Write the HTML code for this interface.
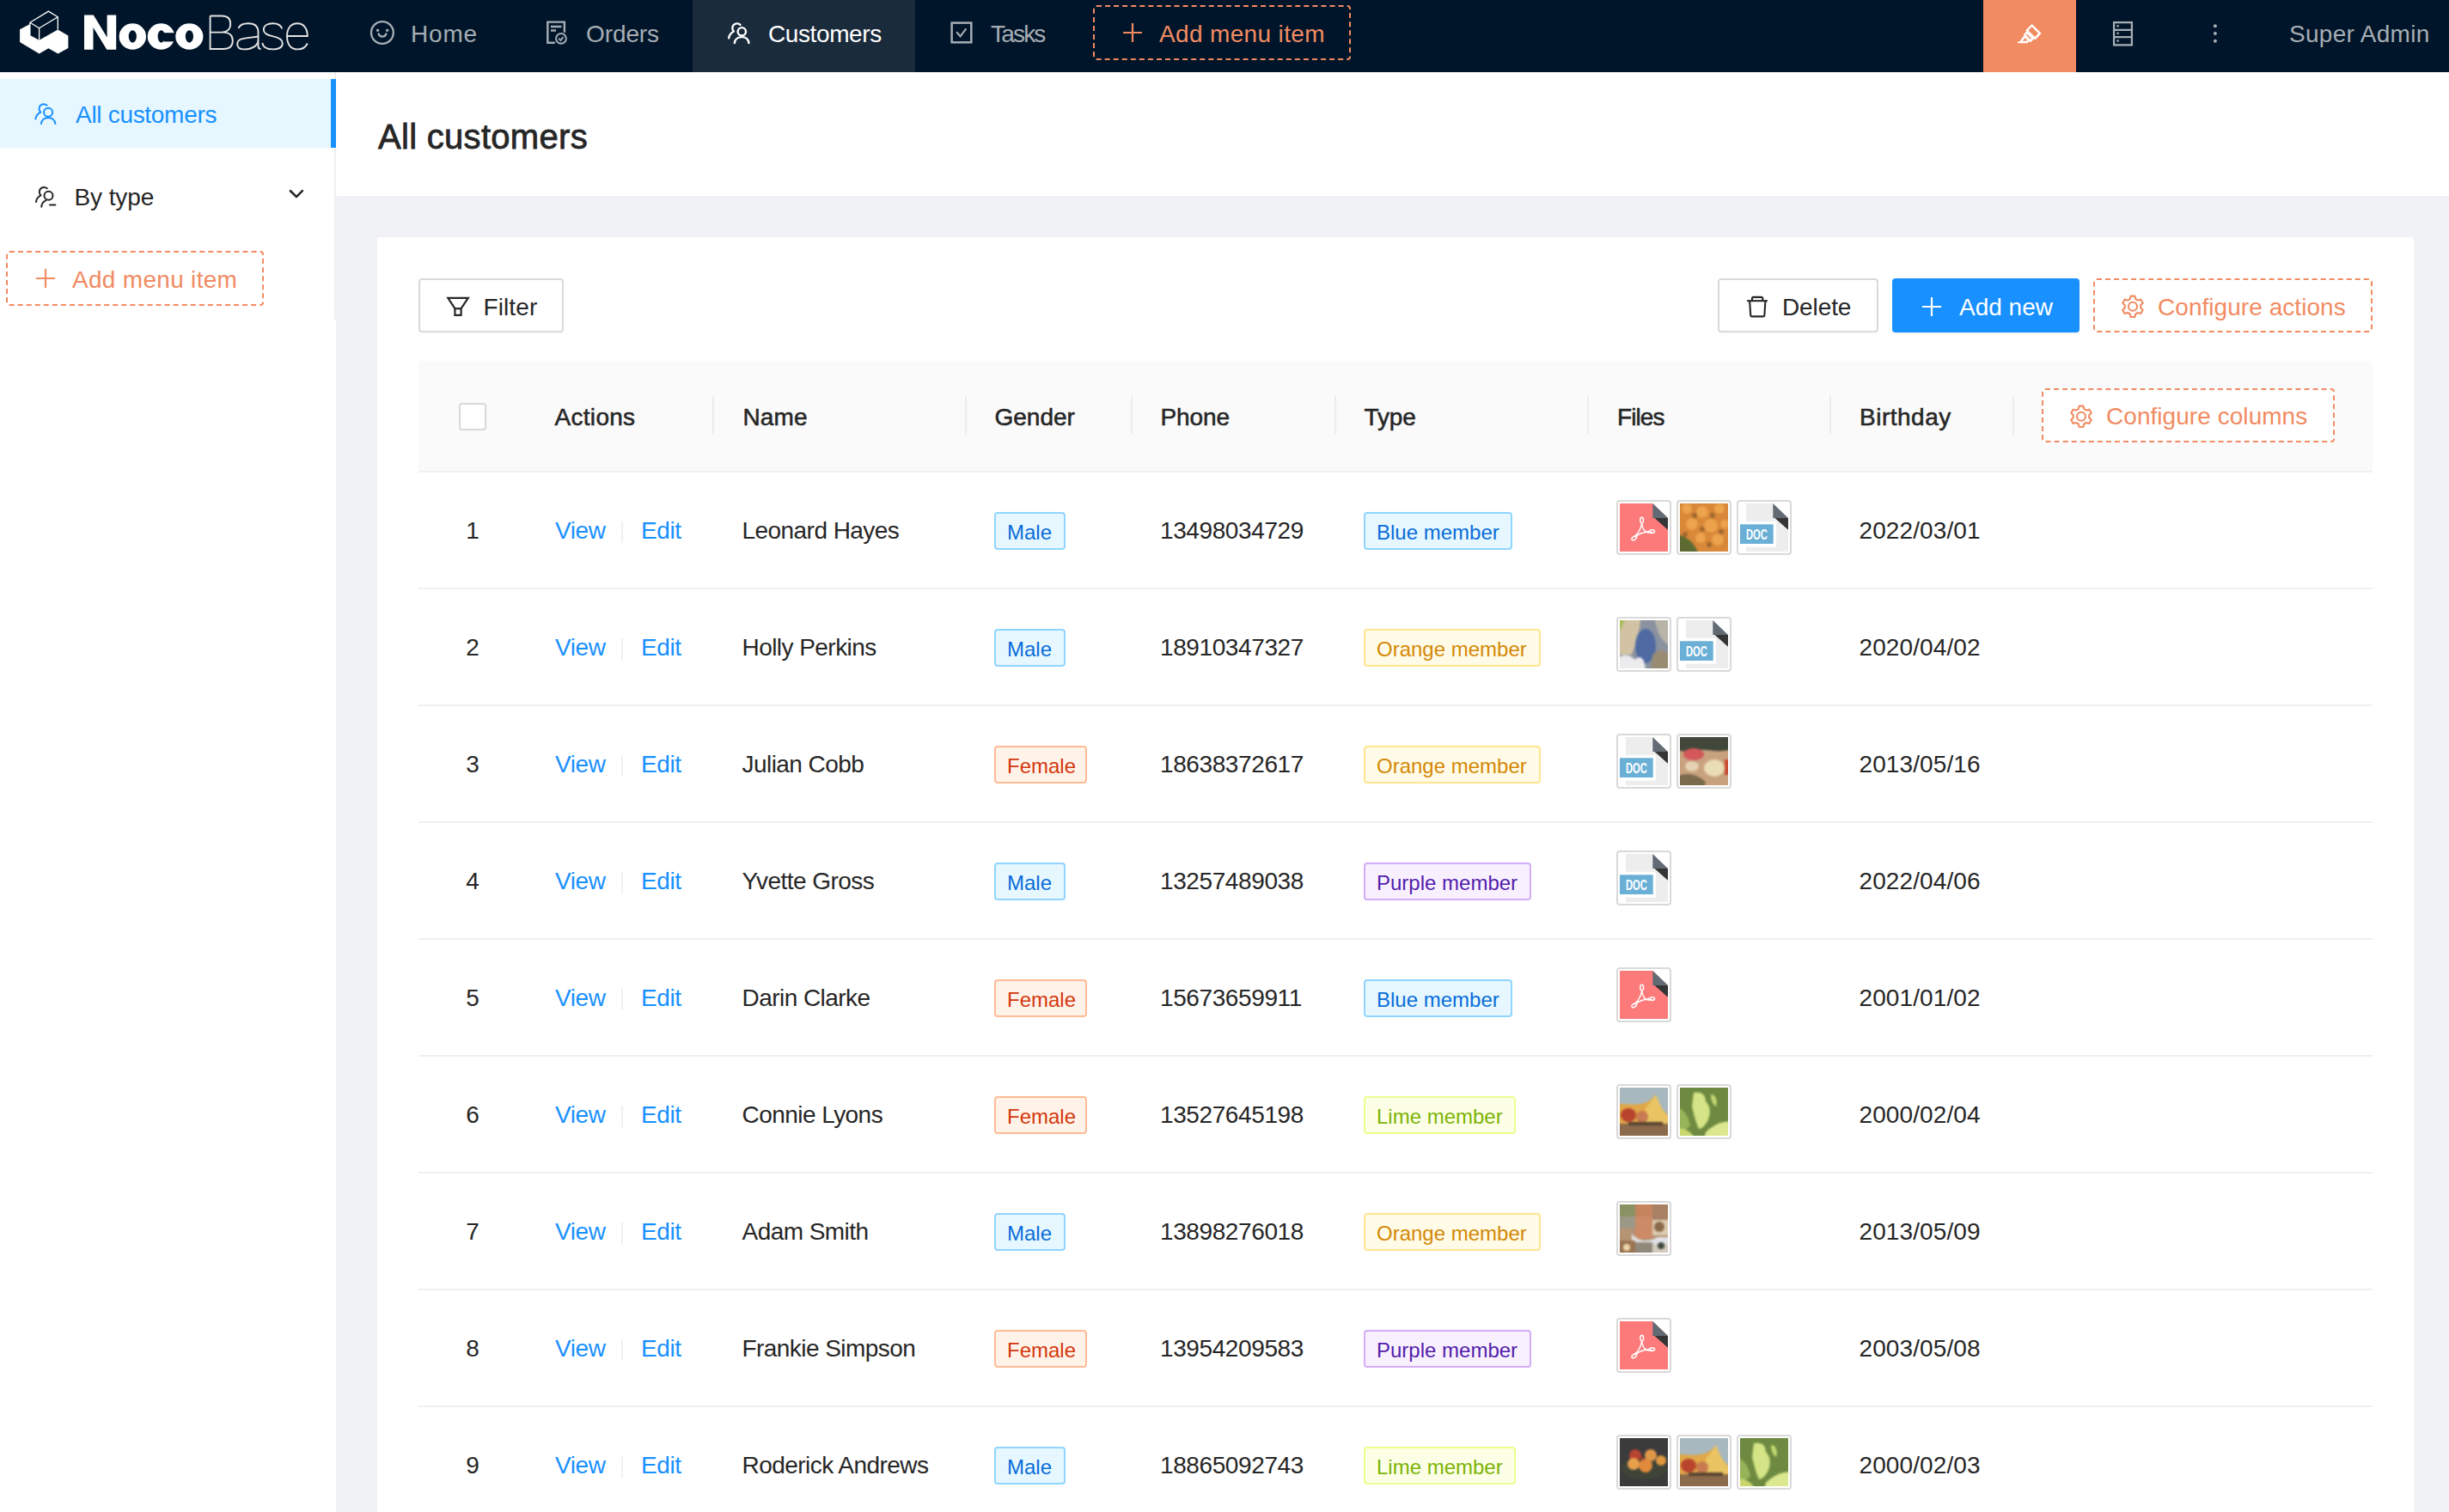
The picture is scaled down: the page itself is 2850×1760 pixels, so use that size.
<!DOCTYPE html>
<html><head><meta charset="utf-8"><style>
html,body{margin:0;padding:0;width:2850px;height:1760px;overflow:hidden;font-family:"Liberation Sans", sans-serif}
body{position:relative}
.t{position:absolute;white-space:nowrap;font-family:"Liberation Sans", sans-serif}
.tag{position:absolute;box-sizing:border-box;height:44px;border:2px solid;border-radius:4px;font-size:24px;line-height:44px;padding-left:13px;white-space:nowrap;font-family:"Liberation Sans", sans-serif}
.thumb{position:absolute;box-sizing:border-box;width:64px;height:64px;border:2px solid #d9d9d9;border-radius:4px;padding:2px;background:#fff}
.ti{position:relative;width:56px;height:56px;overflow:hidden}
</style></head><body>
<div style="position:absolute;left:0px;top:0px;width:2850px;height:1760px;background:#f0f2f5"></div><div style="position:absolute;left:0px;top:0px;width:2850px;height:84px;background:#001529"></div><div style="position:absolute;left:806px;top:0px;width:259px;height:84px;background:#1a2b3c"></div><div style="position:absolute;left:2308px;top:0px;width:108px;height:84px;background:#f18b62"></div><svg style="position:absolute;left:0px;top:0px;" width="380" height="84" viewBox="0 0 380 84">
<path fill="#fff" d="M23.1,34.2 L34.9,28.1 L34.9,41.1 L45.6,46.7 L67.3,34.6 L79.4,41.6 L79.4,55.9 L67.5,62.6 L56.4,56.2 L45.6,62.4 L23.1,49 Z"/>
<g fill="none" stroke="#fff" stroke-width="1.3" stroke-linejoin="round">
<path d="M56.4,13.1 L67.3,19.8 L45.6,32.8 L34.9,26.3 Z"/>
<path d="M34.9,26.3 V41.1 M45.6,32.8 V46.7 M67.3,19.8 V34.6"/>
</g>
<path fill="#fff" d="M98,17.6 H108.8 L124.6,43.5 V17.6 H135.2 V57.8 H124.3 L108.5,32 V57.8 H98 Z"/>
<path fill="#fff" fill-rule="evenodd" d="M138.6,42.55 A15.7,15.25 0 1,0 170,42.55 A15.7,15.25 0 1,0 138.6,42.55 Z M149.7,42.45 A4.6,7.2 0 1,0 158.9,42.45 A4.6,7.2 0 1,0 149.7,42.45 Z"/>
<path fill="#fff" fill-rule="evenodd" d="M171.7,42.55 A15.75,15.25 0 1,0 203.2,42.55 A15.75,15.25 0 1,0 171.7,42.55 Z M183.6,42.45 A4.1,7.2 0 1,0 191.8,42.45 A4.1,7.2 0 1,0 183.6,42.45 Z"/>
<rect x="190.5" y="38.2" width="14" height="10.2" fill="#001529"/>
<path fill="#fff" fill-rule="evenodd" d="M204.3,42.55 A16,15.25 0 1,0 236.4,42.55 A16,15.25 0 1,0 204.3,42.55 Z M215.8,42.45 A4.6,7.2 0 1,0 225,42.45 A4.6,7.2 0 1,0 215.8,42.45 Z"/>
<g fill="none" stroke="#e4e4e4" stroke-width="1.9">
<path d="M244.6,18.5 V57 H260 C267.5,57 270.8,53 270.8,47.3 C270.8,41.5 267,37.6 259.5,37.6 H244.6 M244.6,18.5 H258 C265,18.5 268.2,22 268.2,27.8 C268.2,33.5 264.5,37.6 258,37.6"/>
<path d="M277.5,33 C279,28.5 283,27.2 289,27.2 C296.5,27.2 300.5,30.5 300.5,37.5 V53.5 C300.5,56 301.5,57 303.5,57 M300.5,42.5 C292,43.8 285,44.2 280.5,45.6 C277.5,46.6 276.2,49 276.2,51.5 C276.2,55.3 279.5,57.4 284.5,57.4 C292.5,57.4 300.5,53.5 300.5,46.5"/>
<path d="M328.3,33.5 C327,29.3 323,27.2 317.5,27.2 C311,27.2 306.8,30 306.8,34.5 C306.8,39 310.5,40.8 317,42.1 C324,43.5 328.8,45.5 328.8,50.3 C328.8,54.8 324.5,57.4 317.5,57.4 C310.5,57.4 306.2,54.8 305.2,50"/>
<path d="M334,42 H357.8 C357.8,32.5 353,27.2 346,27.2 C338.5,27.2 334,33 334,42.3 C334,51.5 338.5,57.4 346.2,57.4 C352,57.4 355.8,55 357.8,50.5"/>
</g>
</svg><svg style="position:absolute;left:420px;top:14px;" width="60" height="50" viewBox="0 0 60 50"><g fill="none" stroke="#a6adb4" stroke-width="2.3"><circle cx="24.9" cy="24" r="12.9"/><path d="M20.6,25.4 C21.8,29.6 28.2,29.6 29.4,25.4" stroke-linecap="round"/></g><g fill="#a6adb4"><rect x="18" y="19.9" width="3.2" height="2.8"/><rect x="29" y="19.9" width="3.2" height="2.8"/></g></svg><div class="t" style="left:478px;top:26.20px;font-size:28px;line-height:28px;color:#a6adb4;font-weight:normal;letter-spacing:0.8px;">Home</div><svg style="position:absolute;left:625px;top:14px;" width="50" height="50" viewBox="0 0 50 50"><g fill="none" stroke="#a6adb4" stroke-width="2.4"><path d="M20.8,35.7 H12.3 V11.6 H31.9 V23.7"/><path d="M16,17 H28.4 M16,21.5 H22"/></g><g fill="none" stroke="#a6adb4" stroke-width="2"><circle cx="27.95" cy="30.9" r="5.9"/><path d="M25.1,30.8 L27.5,33.1 L30.4,29.1"/></g></svg><div class="t" style="left:682px;top:26.20px;font-size:28px;line-height:28px;color:#a6adb4;font-weight:normal;letter-spacing:-0.1px;">Orders</div><svg style="position:absolute;left:835px;top:14px;" width="50" height="50" viewBox="0 0 50 50"><g fill="none" stroke="#fff" stroke-width="2.4" stroke-linecap="round" stroke-linejoin="round"><path d="M26.5,14.9 A5.2,5.2 0 1,0 18.9,22.5 C15.5,24.3 13.6,27 13.2,30.4"/><circle cx="28.3" cy="22.8" r="4.7"/><path d="M19.8,36.1 C20.3,31.8 23.8,29.1 28.3,29.1 C32.8,29.1 36,31.8 36.4,36.1"/></g></svg><div class="t" style="left:894px;top:26.20px;font-size:28px;line-height:28px;color:#fff;font-weight:normal;letter-spacing:-0.4px;">Customers</div><svg style="position:absolute;left:1095px;top:14px;" width="50" height="50" viewBox="0 0 50 50"><g fill="none" stroke="#a6adb4" stroke-width="2.5"><rect x="12.6" y="12.6" width="22.7" height="22.7"/></g><path d="M18.2,23.3 L22.5,28.3 L29.4,19.4" fill="none" stroke="#a6adb4" stroke-width="2.1"/></svg><div class="t" style="left:1153px;top:26.20px;font-size:28px;line-height:28px;color:#a6adb4;font-weight:normal;letter-spacing:-1.8px;">Tasks</div><div style="position:absolute;left:1272px;top:6px;width:300px;height:64px;border:2px dashed #f18b62;border-radius:4px;box-sizing:border-box"></div><svg style="position:absolute;left:1300px;top:20px;" width="40" height="40" viewBox="0 0 40 40"><path d="M18,7 V29 M7,18 H29" stroke="#f18b62" stroke-width="2.2"/></svg><div class="t" style="left:1349px;top:26.20px;font-size:28px;line-height:28px;color:#f18b62;font-weight:normal;letter-spacing:0.35px;">Add menu item</div><svg style="position:absolute;left:2332px;top:14px;" width="60" height="50" viewBox="0 0 60 50"><g fill="#fff" fill-rule="evenodd"><path d="M32.6,14.1 L43.7,24.8 L36.4,32.4 L25.1,21.5 Z M32.4,17.1 L40.1,24.8 L36.1,28.9 L28.4,21.5 Z"/><path d="M26.3,22.4 L35.2,31.2 L30.9,35.4 L22.6,26.8 Z M26.8,25.6 L31.8,30.5 L30.8,31.7 L25.8,26.7 Z"/><path d="M23.2,27.5 L29.5,34 L27.6,36.3 L16.2,36.3 L16.2,34.3 L18.5,34.3 Z M24.6,30.3 L27.2,32.8 L26.4,33.8 L21.6,33.8 Z"/></g></svg><svg style="position:absolute;left:2440px;top:14px;" width="160" height="50" viewBox="0 0 160 50"><g fill="none" stroke="#a6adb4" stroke-width="2.3"><rect x="20.1" y="12.1" width="20.8" height="26.3"/><path d="M20.1,20.9 H40.9 M20.1,29.1 H40.9"/></g><g fill="#a6adb4"><circle cx="24.7" cy="16.3" r="1.3"/><circle cx="24.7" cy="24.8" r="1.3"/><circle cx="24.7" cy="33.6" r="1.3"/><circle cx="137.9" cy="16.2" r="2"/><circle cx="137.9" cy="25" r="2"/><circle cx="137.9" cy="33.7" r="2"/></g></svg><div class="t" style="left:2664px;top:26.20px;font-size:28px;line-height:28px;color:#a6adb4;font-weight:normal;letter-spacing:0.3px;">Super Admin</div><div style="position:absolute;left:0px;top:84px;width:391px;height:1676px;background:#fff"></div><div style="position:absolute;left:389px;top:84px;width:2px;height:288px;background:#f0f0f0"></div><div style="position:absolute;left:0px;top:92px;width:385px;height:80px;background:#e6f7ff"></div><div style="position:absolute;left:385px;top:92px;width:6px;height:80px;background:#1890ff"></div><svg style="position:absolute;left:30px;top:108px;" width="50" height="50" viewBox="0 0 50 50"><g fill="none" stroke="#1890ff" stroke-width="2" stroke-linecap="round" stroke-linejoin="round"><path d="M24.5,14.5 A5.3,5.3 0 1,0 17.3,22.6 C14,24.2 11.8,27 11.4,30.4"/><circle cx="26.1" cy="22.8" r="5.05"/><path d="M17.9,36 C18.5,31.5 22,28.9 26.1,28.9 C30.2,28.9 33.8,31.5 34.4,36"/></g></svg><div class="t" style="left:88px;top:119.50px;font-size:28px;line-height:28px;color:#1890ff;font-weight:normal;letter-spacing:-0.3px;">All customers</div><svg style="position:absolute;left:30px;top:205px;" width="50" height="50" viewBox="0 0 50 50"><g fill="none" stroke="#262626" stroke-width="2" stroke-linecap="round" stroke-linejoin="round"><path d="M24.8,14.3 A5.3,5.3 0 1,0 17.6,22.4 C14.4,24 12.3,27 11.9,30.1"/><circle cx="26.5" cy="22.8" r="5"/><path d="M18.2,35.7 C18.6,32 20.5,29.5 23.4,28.3"/><path d="M28,33.4 H34.4"/></g></svg><div class="t" style="left:86.5px;top:215.70px;font-size:28px;line-height:28px;color:#262626;font-weight:normal;letter-spacing:-0.1px;">By type</div><svg style="position:absolute;left:320px;top:205px;" width="50" height="50" viewBox="0 0 50 50"><path d="M18,17.2 L25,24.1 L31.9,17.2" fill="none" stroke="#262626" stroke-width="2.6" stroke-linecap="round" stroke-linejoin="round"/></svg><div style="position:absolute;left:7px;top:292px;width:300px;height:64px;border:2px dashed #f18b62;border-radius:4px;box-sizing:border-box"></div><svg style="position:absolute;left:30px;top:305px;" width="50" height="50" viewBox="0 0 50 50"><path d="M23,8 V30 M12,19 H34" stroke="#f18b62" stroke-width="2.2"/></svg><div class="t" style="left:84px;top:311.70px;font-size:28px;line-height:28px;color:#f18b62;font-weight:normal;letter-spacing:0.3px;">Add menu item</div><div style="position:absolute;left:391px;top:84px;width:2459px;height:144px;background:#fff"></div><div class="t" style="left:440px;top:138.60px;font-size:40px;line-height:40px;color:#262626;font-weight:normal;letter-spacing:0.3px;-webkit-text-stroke:0.8px #262626;">All customers</div><div style="position:absolute;left:439px;top:276px;width:2370px;height:1494px;background:#fff;border-radius:4px"></div><div style="position:absolute;left:487px;top:324px;width:169px;height:63px;box-sizing:border-box;border-radius:4px;border:2px solid #d9d9d9;background:#fff;box-shadow:0 2px 0 rgba(0,0,0,0.016)"></div><svg style="position:absolute;left:510px;top:330px;" width="50" height="50" viewBox="0 0 50 50"><g fill="none" stroke="#262626" stroke-width="2.2" stroke-linejoin="miter"><path d="M11.3,16.9 H34.8 L26.6,29.2 V36.9 H19.4 V29.2 Z"/><path d="M19.4,29.2 H26.6"/></g></svg><div class="t" style="left:562.5px;top:344.00px;font-size:28px;line-height:28px;color:#262626;font-weight:normal;letter-spacing:0.1px;">Filter</div><div style="position:absolute;left:1999px;top:324px;width:187px;height:63px;box-sizing:border-box;border-radius:4px;border:2px solid #d9d9d9;background:#fff;box-shadow:0 2px 0 rgba(0,0,0,0.016)"></div><svg style="position:absolute;left:2020px;top:330px;" width="50" height="50" viewBox="0 0 50 50"><g fill="none" stroke="#262626" stroke-width="2.1" stroke-linejoin="round"><path d="M13.1,20.2 H36.9"/><path d="M19,20.2 V17.5 C19,16.5 19.6,15.9 20.6,15.9 H29.7 C30.7,15.9 31.3,16.5 31.3,17.5 V20.2"/><path d="M16.2,20.5 L17.2,36.8 C17.3,37.8 17.9,38.4 18.9,38.4 H31.7 C32.7,38.4 33.3,37.8 33.4,36.8 L34.4,20.5"/></g></svg><div class="t" style="left:2074px;top:344.00px;font-size:28px;line-height:28px;color:#262626;font-weight:normal;letter-spacing:-0.1px;">Delete</div><div style="position:absolute;left:2202px;top:324px;width:218px;height:63px;box-sizing:border-box;border-radius:4px;background:#1890ff;box-shadow:0 2px 0 rgba(0,0,0,0.045)"></div><svg style="position:absolute;left:2226px;top:330px;" width="50" height="50" viewBox="0 0 50 50"><path d="M22,16 V37.9 M10.9,26.95 H33.1" stroke="#fff" stroke-width="2.15"/></svg><div class="t" style="left:2280px;top:344.00px;font-size:28px;line-height:28px;color:#fff;font-weight:normal;letter-spacing:0px;">Add new</div><div style="position:absolute;left:2436px;top:324px;width:325px;height:63px;box-sizing:border-box;border-radius:4px;border:2px dashed #f18b62;background:#fff"></div><svg style="position:absolute;left:2456px;top:330px;" width="50" height="50" viewBox="0 0 50 50"><g fill="none" stroke="#f18b62" stroke-width="2.1" stroke-linejoin="round"><path d="M22.67,18.12 L23.63,14.63 L28.37,14.63 L29.33,18.12 L31.85,19.57 L35.36,18.66 L37.72,22.76 L35.19,25.35 L35.19,28.25 L37.72,30.84 L35.36,34.94 L31.85,34.03 L29.33,35.48 L28.37,38.97 L23.63,38.97 L22.67,35.48 L20.15,34.03 L16.64,34.94 L14.28,30.84 L16.81,28.25 L16.81,25.35 L14.28,22.76 L16.64,18.66 L20.15,19.57 Z"/><circle cx="26" cy="26.8" r="5"/></g></svg><div class="t" style="left:2511px;top:344.00px;font-size:28px;line-height:28px;color:#f18b62;font-weight:normal;letter-spacing:0.05px;">Configure actions</div><div style="position:absolute;left:487px;top:420px;width:2274px;height:130px;background:#fafafa;border-radius:4px 4px 0 0"></div><div style="position:absolute;left:487px;top:548px;width:2274px;height:2px;background:#f0f0f0"></div><div style="position:absolute;left:534px;top:469px;width:32px;height:32px;box-sizing:border-box;border:2px solid #d9d9d9;border-radius:4px;background:#fff"></div><div class="t" style="left:645.5px;top:471.80px;font-size:28px;line-height:28px;color:#262626;font-weight:normal;letter-spacing:0.3px;-webkit-text-stroke:0.55px #262626;">Actions</div><div class="t" style="left:864.5px;top:471.80px;font-size:28px;line-height:28px;color:#262626;font-weight:normal;letter-spacing:0.1px;-webkit-text-stroke:0.55px #262626;">Name</div><div class="t" style="left:1157.5px;top:471.80px;font-size:28px;line-height:28px;color:#262626;font-weight:normal;letter-spacing:0px;-webkit-text-stroke:0.55px #262626;">Gender</div><div class="t" style="left:1350.5px;top:471.80px;font-size:28px;line-height:28px;color:#262626;font-weight:normal;letter-spacing:-0.1px;-webkit-text-stroke:0.55px #262626;">Phone</div><div class="t" style="left:1587.5px;top:471.80px;font-size:28px;line-height:28px;color:#262626;font-weight:normal;letter-spacing:-0.1px;-webkit-text-stroke:0.55px #262626;">Type</div><div class="t" style="left:1882px;top:471.80px;font-size:28px;line-height:28px;color:#262626;font-weight:normal;letter-spacing:-0.9px;-webkit-text-stroke:0.55px #262626;">Files</div><div class="t" style="left:2164px;top:471.80px;font-size:28px;line-height:28px;color:#262626;font-weight:normal;letter-spacing:0.5px;-webkit-text-stroke:0.55px #262626;">Birthday</div><div style="position:absolute;left:829px;top:461px;width:2px;height:45px;background:#ececec"></div><div style="position:absolute;left:1123px;top:461px;width:2px;height:45px;background:#ececec"></div><div style="position:absolute;left:1316px;top:461px;width:2px;height:45px;background:#ececec"></div><div style="position:absolute;left:1553px;top:461px;width:2px;height:45px;background:#ececec"></div><div style="position:absolute;left:1847px;top:461px;width:2px;height:45px;background:#ececec"></div><div style="position:absolute;left:2129px;top:461px;width:2px;height:45px;background:#ececec"></div><div style="position:absolute;left:2342px;top:461px;width:2px;height:45px;background:#ececec"></div><div style="position:absolute;left:2376px;top:452px;width:341px;height:63px;box-sizing:border-box;border-radius:4px;border:2px dashed #f18b62;background:#fff"></div><svg style="position:absolute;left:2396px;top:458px;" width="50" height="50" viewBox="0 0 50 50"><g fill="none" stroke="#f18b62" stroke-width="2.1" stroke-linejoin="round"><path d="M22.67,18.12 L23.63,14.63 L28.37,14.63 L29.33,18.12 L31.85,19.57 L35.36,18.66 L37.72,22.76 L35.19,25.35 L35.19,28.25 L37.72,30.84 L35.36,34.94 L31.85,34.03 L29.33,35.48 L28.37,38.97 L23.63,38.97 L22.67,35.48 L20.15,34.03 L16.64,34.94 L14.28,30.84 L16.81,28.25 L16.81,25.35 L14.28,22.76 L16.64,18.66 L20.15,19.57 Z"/><circle cx="26" cy="26.8" r="5"/></g></svg><div class="t" style="left:2451px;top:471.00px;font-size:28px;line-height:28px;color:#f18b62;font-weight:normal;letter-spacing:0.05px;">Configure columns</div><div style="position:absolute;left:487px;top:684px;width:2274px;height:2px;background:#f0f0f0"></div><div class="t" style="left:530px;width:40px;text-align:center;top:604.20px;font-size:28px;line-height:28px;color:#262626">1</div><div class="t" style="left:646px;top:604.20px;font-size:28px;line-height:28px;color:#1890ff;font-weight:normal;letter-spacing:-0.4px;">View</div><div style="position:absolute;left:723px;top:607px;width:2px;height:25px;background:#f0f0f0"></div><div class="t" style="left:746px;top:604.20px;font-size:28px;line-height:28px;color:#1890ff;font-weight:normal;letter-spacing:-0.4px;">Edit</div><div class="t" style="left:863.5px;top:604.20px;font-size:28px;line-height:28px;color:#262626;font-weight:normal;letter-spacing:-0.55px;">Leonard Hayes</div><div class="tag" style="left:1157px;top:596px;width:83px;color:#096dd9;background:#e6f7ff;border-color:#91d5ff">Male</div><div class="t" style="left:1350px;top:604.20px;font-size:28px;line-height:28px;color:#262626;font-weight:normal;letter-spacing:-0.4px;">13498034729</div><div class="tag" style="left:1587px;top:596px;width:173px;color:#096dd9;background:#e6f7ff;border-color:#91d5ff">Blue member</div><div class="thumb" style="left:1881px;top:582px"><div class="ti"><svg style="position:absolute;left:0;top:0" width="56" height="56"><path d="M0,0 H38.3 L56,17.1 V56 H0 Z" fill="#fd7a7a"/><path d="M38.3,0 V17.1 H56 Z" fill="#626a74"/><path d="M40.5,17.1 H56 V30.8 Z" fill="#353535"/><g fill="none" stroke="#fff" stroke-width="1.5" stroke-linejoin="round"><ellipse cx="25.7" cy="19.6" rx="1.9" ry="3.3"/><path d="M25.7,23 C26,27 27.5,31 30.5,33.2 C32.5,34.5 35,34.2 37.5,33.3"/><ellipse cx="37.6" cy="32.6" rx="3" ry="1.8"/><path d="M25.7,23 C25,28 21.5,35 16.5,39.5"/><ellipse cx="16.8" cy="40.3" rx="3.2" ry="1.9" transform="rotate(-35 16.8 40.3)"/><path d="M19,38.5 C22,35 28,33.5 35,32.6"/></g></svg></div></div><div class="thumb" style="left:1951px;top:582px"><div class="ti"><svg style="position:absolute;left:-4px;top:-4px;filter:blur(0.9px)" width="64" height="64" viewBox="-4 -4 64 64"><rect x="-4" y="-4" width="64" height="64" fill="#d88838"/><g fill="#eda24c"><circle cx="8" cy="6" r="6"/><circle cx="26" cy="10" r="7"/><circle cx="46" cy="6" r="6"/><circle cx="14" cy="24" r="7"/><circle cx="36" cy="26" r="8"/><circle cx="52" cy="24" r="5"/><circle cx="24" cy="40" r="6"/><circle cx="44" cy="42" r="7"/></g><g fill="#8a5a2a" opacity="0.7"><circle cx="17" cy="14" r="3"/><circle cx="38" cy="14" r="3"/><circle cx="26" cy="30" r="3"/><circle cx="48" cy="33" r="3"/><circle cx="6" cy="36" r="3"/><circle cx="34" cy="48" r="3"/></g><path d="M-4,36 C8,38 18,46 22,60 H-4 Z" fill="#5d6b32"/></svg></div></div><div class="thumb" style="left:2021px;top:582px"><div class="ti"><svg style="position:absolute;left:0;top:0" width="56" height="56"><path d="M6.9,0 H38.3 L56,17.1 V56 H6.9 Z" fill="#ededed"/><path d="M38.3,0 V17.1 H56 Z" fill="#626a74"/><path d="M40.5,17.1 H56 V30.8 Z" fill="#353535"/><rect x="0" y="20.8" width="42.1" height="29.9" fill="#fff"/><rect x="0" y="24.3" width="38.7" height="22.7" fill="#6aafd6"/><text x="6.9" y="41.9" font-family="Liberation Sans" font-weight="bold" font-size="16.5" fill="#fff" textLength="25" lengthAdjust="spacingAndGlyphs">DOC</text></svg></div></div><div class="t" style="left:2163.5px;top:604.20px;font-size:28px;line-height:28px;color:#262626;font-weight:normal;letter-spacing:0.1px;">2022/03/01</div><div style="position:absolute;left:487px;top:820px;width:2274px;height:2px;background:#f0f0f0"></div><div class="t" style="left:530px;width:40px;text-align:center;top:740.20px;font-size:28px;line-height:28px;color:#262626">2</div><div class="t" style="left:646px;top:740.20px;font-size:28px;line-height:28px;color:#1890ff;font-weight:normal;letter-spacing:-0.4px;">View</div><div style="position:absolute;left:723px;top:743px;width:2px;height:25px;background:#f0f0f0"></div><div class="t" style="left:746px;top:740.20px;font-size:28px;line-height:28px;color:#1890ff;font-weight:normal;letter-spacing:-0.4px;">Edit</div><div class="t" style="left:863.5px;top:740.20px;font-size:28px;line-height:28px;color:#262626;font-weight:normal;letter-spacing:-0.55px;">Holly Perkins</div><div class="tag" style="left:1157px;top:732px;width:83px;color:#096dd9;background:#e6f7ff;border-color:#91d5ff">Male</div><div class="t" style="left:1350px;top:740.20px;font-size:28px;line-height:28px;color:#262626;font-weight:normal;letter-spacing:-0.4px;">18910347327</div><div class="tag" style="left:1587px;top:732px;width:206px;color:#d48806;background:#fffbe6;border-color:#ffe58f">Orange member</div><div class="thumb" style="left:1881px;top:718px"><div class="ti"><svg style="position:absolute;left:-4px;top:-4px;filter:blur(0.9px)" width="64" height="64" viewBox="-4 -4 64 64"><rect x="-4" y="-4" width="64" height="64" fill="#8a92a0"/><path d="M-4,-4 H14 V20 H-4 Z" fill="#a8bc5c"/><path d="M8,-4 H24 C24,10 20,24 14,40 H-4 V20 Z" fill="#d2c3a4"/><ellipse cx="30" cy="30" rx="12" ry="20" fill="#4f6aa2"/><path d="M40,-4 H60 V30 C50,26 44,18 40,-4 Z" fill="#b8b4a8"/><path d="M-4,44 C6,38 12,40 18,46 C22,40 30,42 30,60 H-4 Z" fill="#ecebee"/><path d="M38,40 L48,34 L60,40 V60 H36 Z" fill="#9a8c72"/></svg></div></div><div class="thumb" style="left:1951px;top:718px"><div class="ti"><svg style="position:absolute;left:0;top:0" width="56" height="56"><path d="M6.9,0 H38.3 L56,17.1 V56 H6.9 Z" fill="#ededed"/><path d="M38.3,0 V17.1 H56 Z" fill="#626a74"/><path d="M40.5,17.1 H56 V30.8 Z" fill="#353535"/><rect x="0" y="20.8" width="42.1" height="29.9" fill="#fff"/><rect x="0" y="24.3" width="38.7" height="22.7" fill="#6aafd6"/><text x="6.9" y="41.9" font-family="Liberation Sans" font-weight="bold" font-size="16.5" fill="#fff" textLength="25" lengthAdjust="spacingAndGlyphs">DOC</text></svg></div></div><div class="t" style="left:2163.5px;top:740.20px;font-size:28px;line-height:28px;color:#262626;font-weight:normal;letter-spacing:0.1px;">2020/04/02</div><div style="position:absolute;left:487px;top:956px;width:2274px;height:2px;background:#f0f0f0"></div><div class="t" style="left:530px;width:40px;text-align:center;top:876.20px;font-size:28px;line-height:28px;color:#262626">3</div><div class="t" style="left:646px;top:876.20px;font-size:28px;line-height:28px;color:#1890ff;font-weight:normal;letter-spacing:-0.4px;">View</div><div style="position:absolute;left:723px;top:879px;width:2px;height:25px;background:#f0f0f0"></div><div class="t" style="left:746px;top:876.20px;font-size:28px;line-height:28px;color:#1890ff;font-weight:normal;letter-spacing:-0.4px;">Edit</div><div class="t" style="left:863.5px;top:876.20px;font-size:28px;line-height:28px;color:#262626;font-weight:normal;letter-spacing:-0.55px;">Julian Cobb</div><div class="tag" style="left:1157px;top:868px;width:108px;color:#d4380d;background:#fff2e8;border-color:#ffbb96">Female</div><div class="t" style="left:1350px;top:876.20px;font-size:28px;line-height:28px;color:#262626;font-weight:normal;letter-spacing:-0.4px;">18638372617</div><div class="tag" style="left:1587px;top:868px;width:206px;color:#d48806;background:#fffbe6;border-color:#ffe58f">Orange member</div><div class="thumb" style="left:1881px;top:854px"><div class="ti"><svg style="position:absolute;left:0;top:0" width="56" height="56"><path d="M6.9,0 H38.3 L56,17.1 V56 H6.9 Z" fill="#ededed"/><path d="M38.3,0 V17.1 H56 Z" fill="#626a74"/><path d="M40.5,17.1 H56 V30.8 Z" fill="#353535"/><rect x="0" y="20.8" width="42.1" height="29.9" fill="#fff"/><rect x="0" y="24.3" width="38.7" height="22.7" fill="#6aafd6"/><text x="6.9" y="41.9" font-family="Liberation Sans" font-weight="bold" font-size="16.5" fill="#fff" textLength="25" lengthAdjust="spacingAndGlyphs">DOC</text></svg></div></div><div class="thumb" style="left:1951px;top:854px"><div class="ti"><svg style="position:absolute;left:-4px;top:-4px;filter:blur(0.9px)" width="64" height="64" viewBox="-4 -4 64 64"><rect x="-4" y="-4" width="64" height="64" fill="#c8a27e"/><path d="M-4,-4 H60 V14 C44,20 30,12 16,16 C8,18 0,16 -4,14 Z" fill="#41473a"/><ellipse cx="16" cy="20" rx="12" ry="7" fill="#d4585a"/><ellipse cx="40" cy="36" rx="12" ry="10" fill="#eadcb4"/><ellipse cx="14" cy="34" rx="8" ry="6" fill="#e6d2b2"/><path d="M52,26 H60 V44 H52 Z" fill="#c84a30"/><path d="M-4,46 C10,40 20,44 30,52 L28,60 H-4 Z" fill="#7c6a4c"/></svg></div></div><div class="t" style="left:2163.5px;top:876.20px;font-size:28px;line-height:28px;color:#262626;font-weight:normal;letter-spacing:0.1px;">2013/05/16</div><div style="position:absolute;left:487px;top:1092px;width:2274px;height:2px;background:#f0f0f0"></div><div class="t" style="left:530px;width:40px;text-align:center;top:1012.20px;font-size:28px;line-height:28px;color:#262626">4</div><div class="t" style="left:646px;top:1012.20px;font-size:28px;line-height:28px;color:#1890ff;font-weight:normal;letter-spacing:-0.4px;">View</div><div style="position:absolute;left:723px;top:1015px;width:2px;height:25px;background:#f0f0f0"></div><div class="t" style="left:746px;top:1012.20px;font-size:28px;line-height:28px;color:#1890ff;font-weight:normal;letter-spacing:-0.4px;">Edit</div><div class="t" style="left:863.5px;top:1012.20px;font-size:28px;line-height:28px;color:#262626;font-weight:normal;letter-spacing:-0.55px;">Yvette Gross</div><div class="tag" style="left:1157px;top:1004px;width:83px;color:#096dd9;background:#e6f7ff;border-color:#91d5ff">Male</div><div class="t" style="left:1350px;top:1012.20px;font-size:28px;line-height:28px;color:#262626;font-weight:normal;letter-spacing:-0.4px;">13257489038</div><div class="tag" style="left:1587px;top:1004px;width:195px;color:#531dab;background:#f9f0ff;border-color:#d3adf7">Purple member</div><div class="thumb" style="left:1881px;top:990px"><div class="ti"><svg style="position:absolute;left:0;top:0" width="56" height="56"><path d="M6.9,0 H38.3 L56,17.1 V56 H6.9 Z" fill="#ededed"/><path d="M38.3,0 V17.1 H56 Z" fill="#626a74"/><path d="M40.5,17.1 H56 V30.8 Z" fill="#353535"/><rect x="0" y="20.8" width="42.1" height="29.9" fill="#fff"/><rect x="0" y="24.3" width="38.7" height="22.7" fill="#6aafd6"/><text x="6.9" y="41.9" font-family="Liberation Sans" font-weight="bold" font-size="16.5" fill="#fff" textLength="25" lengthAdjust="spacingAndGlyphs">DOC</text></svg></div></div><div class="t" style="left:2163.5px;top:1012.20px;font-size:28px;line-height:28px;color:#262626;font-weight:normal;letter-spacing:0.1px;">2022/04/06</div><div style="position:absolute;left:487px;top:1228px;width:2274px;height:2px;background:#f0f0f0"></div><div class="t" style="left:530px;width:40px;text-align:center;top:1148.20px;font-size:28px;line-height:28px;color:#262626">5</div><div class="t" style="left:646px;top:1148.20px;font-size:28px;line-height:28px;color:#1890ff;font-weight:normal;letter-spacing:-0.4px;">View</div><div style="position:absolute;left:723px;top:1151px;width:2px;height:25px;background:#f0f0f0"></div><div class="t" style="left:746px;top:1148.20px;font-size:28px;line-height:28px;color:#1890ff;font-weight:normal;letter-spacing:-0.4px;">Edit</div><div class="t" style="left:863.5px;top:1148.20px;font-size:28px;line-height:28px;color:#262626;font-weight:normal;letter-spacing:-0.55px;">Darin Clarke</div><div class="tag" style="left:1157px;top:1140px;width:108px;color:#d4380d;background:#fff2e8;border-color:#ffbb96">Female</div><div class="t" style="left:1350px;top:1148.20px;font-size:28px;line-height:28px;color:#262626;font-weight:normal;letter-spacing:-0.4px;">15673659911</div><div class="tag" style="left:1587px;top:1140px;width:173px;color:#096dd9;background:#e6f7ff;border-color:#91d5ff">Blue member</div><div class="thumb" style="left:1881px;top:1126px"><div class="ti"><svg style="position:absolute;left:0;top:0" width="56" height="56"><path d="M0,0 H38.3 L56,17.1 V56 H0 Z" fill="#fd7a7a"/><path d="M38.3,0 V17.1 H56 Z" fill="#626a74"/><path d="M40.5,17.1 H56 V30.8 Z" fill="#353535"/><g fill="none" stroke="#fff" stroke-width="1.5" stroke-linejoin="round"><ellipse cx="25.7" cy="19.6" rx="1.9" ry="3.3"/><path d="M25.7,23 C26,27 27.5,31 30.5,33.2 C32.5,34.5 35,34.2 37.5,33.3"/><ellipse cx="37.6" cy="32.6" rx="3" ry="1.8"/><path d="M25.7,23 C25,28 21.5,35 16.5,39.5"/><ellipse cx="16.8" cy="40.3" rx="3.2" ry="1.9" transform="rotate(-35 16.8 40.3)"/><path d="M19,38.5 C22,35 28,33.5 35,32.6"/></g></svg></div></div><div class="t" style="left:2163.5px;top:1148.20px;font-size:28px;line-height:28px;color:#262626;font-weight:normal;letter-spacing:0.1px;">2001/01/02</div><div style="position:absolute;left:487px;top:1364px;width:2274px;height:2px;background:#f0f0f0"></div><div class="t" style="left:530px;width:40px;text-align:center;top:1284.20px;font-size:28px;line-height:28px;color:#262626">6</div><div class="t" style="left:646px;top:1284.20px;font-size:28px;line-height:28px;color:#1890ff;font-weight:normal;letter-spacing:-0.4px;">View</div><div style="position:absolute;left:723px;top:1287px;width:2px;height:25px;background:#f0f0f0"></div><div class="t" style="left:746px;top:1284.20px;font-size:28px;line-height:28px;color:#1890ff;font-weight:normal;letter-spacing:-0.4px;">Edit</div><div class="t" style="left:863.5px;top:1284.20px;font-size:28px;line-height:28px;color:#262626;font-weight:normal;letter-spacing:-0.55px;">Connie Lyons</div><div class="tag" style="left:1157px;top:1276px;width:108px;color:#d4380d;background:#fff2e8;border-color:#ffbb96">Female</div><div class="t" style="left:1350px;top:1284.20px;font-size:28px;line-height:28px;color:#262626;font-weight:normal;letter-spacing:-0.4px;">13527645198</div><div class="tag" style="left:1587px;top:1276px;width:177px;color:#7cb305;background:#fcffe6;border-color:#eaff8f">Lime member</div><div class="thumb" style="left:1881px;top:1262px"><div class="ti"><svg style="position:absolute;left:-4px;top:-4px;filter:blur(0.9px)" width="64" height="64" viewBox="-4 -4 64 64"><rect x="-4" y="-4" width="64" height="64" fill="#e0a848"/><path d="M-4,-4 H60 V34 C50,30 44,14 40,10 C34,18 24,22 -4,18 Z" fill="#a8b8bf"/><path d="M30,24 C38,14 42,8 42,8 C46,18 50,30 60,36 V44 H30 Z" fill="#eac462"/><ellipse cx="10" cy="32" rx="9" ry="8" fill="#b8442e"/><ellipse cx="26" cy="34" rx="7" ry="7" fill="#c87a50"/><path d="M-4,42 H60 V60 H-4 Z" fill="#8c6a4c"/><path d="M10,40 H50 V44 H10 Z" fill="#5a4430"/></svg></div></div><div class="thumb" style="left:1951px;top:1262px"><div class="ti"><svg style="position:absolute;left:-4px;top:-4px;filter:blur(0.9px)" width="64" height="64" viewBox="-4 -4 64 64"><rect x="-4" y="-4" width="64" height="64" fill="#6e8a40"/><path d="M-4,22 C6,26 10,34 12,44 C8,50 0,52 -4,50 Z" fill="#98b458"/><path d="M16,6 C24,4 30,8 30,16 C34,20 36,26 34,34 C32,42 26,48 22,48 C18,40 16,30 14,22 Z" fill="#d4e486"/><path d="M36,8 C42,8 44,16 42,22 C38,20 36,14 36,8 Z" fill="#c4d874"/><path d="M30,52 C38,44 50,38 60,40 V60 H28 Z" fill="#dce890"/><path d="M-4,48 C6,46 14,52 18,60 H-4 Z" fill="#cad66e"/></svg></div></div><div class="t" style="left:2163.5px;top:1284.20px;font-size:28px;line-height:28px;color:#262626;font-weight:normal;letter-spacing:0.1px;">2000/02/04</div><div style="position:absolute;left:487px;top:1500px;width:2274px;height:2px;background:#f0f0f0"></div><div class="t" style="left:530px;width:40px;text-align:center;top:1420.20px;font-size:28px;line-height:28px;color:#262626">7</div><div class="t" style="left:646px;top:1420.20px;font-size:28px;line-height:28px;color:#1890ff;font-weight:normal;letter-spacing:-0.4px;">View</div><div style="position:absolute;left:723px;top:1423px;width:2px;height:25px;background:#f0f0f0"></div><div class="t" style="left:746px;top:1420.20px;font-size:28px;line-height:28px;color:#1890ff;font-weight:normal;letter-spacing:-0.4px;">Edit</div><div class="t" style="left:863.5px;top:1420.20px;font-size:28px;line-height:28px;color:#262626;font-weight:normal;letter-spacing:-0.55px;">Adam Smith</div><div class="tag" style="left:1157px;top:1412px;width:83px;color:#096dd9;background:#e6f7ff;border-color:#91d5ff">Male</div><div class="t" style="left:1350px;top:1420.20px;font-size:28px;line-height:28px;color:#262626;font-weight:normal;letter-spacing:-0.4px;">13898276018</div><div class="tag" style="left:1587px;top:1412px;width:206px;color:#d48806;background:#fffbe6;border-color:#ffe58f">Orange member</div><div class="thumb" style="left:1881px;top:1398px"><div class="ti"><svg style="position:absolute;left:-4px;top:-4px;filter:blur(0.9px)" width="64" height="64" viewBox="-4 -4 64 64"><rect x="-4" y="-4" width="64" height="64" fill="#b09070"/><path d="M-4,-4 H18 V14 H-4 Z" fill="#8a9264"/><path d="M18,-4 H38 V14 H18 Z" fill="#c6845e"/><path d="M38,-4 H60 V18 H38 Z" fill="#a88064"/><path d="M-4,14 H18 V28 H-4 Z" fill="#9c9888"/><path d="M18,14 H38 V40 H18 Z" fill="#cc8a66"/><path d="M38,18 H60 V36 H38 Z" fill="#dccbb0"/><circle cx="46" cy="26" r="6" fill="#8a6a48"/><path d="M-4,28 H18 V42 H-4 Z" fill="#b49474"/><path d="M14,34 C22,44 34,44 44,38 L60,38 V48 H14 Z" fill="#e2e2e6"/><path d="M-4,42 H18 V60 H-4 Z" fill="#9a7452"/><circle cx="8" cy="50" r="4" fill="#ecd8a8"/><path d="M18,44 H38 V60 H18 Z" fill="#90887a"/><path d="M38,46 H60 V60 H38 Z" fill="#d4ccbe"/><circle cx="48" cy="48" r="4" fill="#404840"/></svg></div></div><div class="t" style="left:2163.5px;top:1420.20px;font-size:28px;line-height:28px;color:#262626;font-weight:normal;letter-spacing:0.1px;">2013/05/09</div><div style="position:absolute;left:487px;top:1636px;width:2274px;height:2px;background:#f0f0f0"></div><div class="t" style="left:530px;width:40px;text-align:center;top:1556.20px;font-size:28px;line-height:28px;color:#262626">8</div><div class="t" style="left:646px;top:1556.20px;font-size:28px;line-height:28px;color:#1890ff;font-weight:normal;letter-spacing:-0.4px;">View</div><div style="position:absolute;left:723px;top:1559px;width:2px;height:25px;background:#f0f0f0"></div><div class="t" style="left:746px;top:1556.20px;font-size:28px;line-height:28px;color:#1890ff;font-weight:normal;letter-spacing:-0.4px;">Edit</div><div class="t" style="left:863.5px;top:1556.20px;font-size:28px;line-height:28px;color:#262626;font-weight:normal;letter-spacing:-0.55px;">Frankie Simpson</div><div class="tag" style="left:1157px;top:1548px;width:108px;color:#d4380d;background:#fff2e8;border-color:#ffbb96">Female</div><div class="t" style="left:1350px;top:1556.20px;font-size:28px;line-height:28px;color:#262626;font-weight:normal;letter-spacing:-0.4px;">13954209583</div><div class="tag" style="left:1587px;top:1548px;width:195px;color:#531dab;background:#f9f0ff;border-color:#d3adf7">Purple member</div><div class="thumb" style="left:1881px;top:1534px"><div class="ti"><svg style="position:absolute;left:0;top:0" width="56" height="56"><path d="M0,0 H38.3 L56,17.1 V56 H0 Z" fill="#fd7a7a"/><path d="M38.3,0 V17.1 H56 Z" fill="#626a74"/><path d="M40.5,17.1 H56 V30.8 Z" fill="#353535"/><g fill="none" stroke="#fff" stroke-width="1.5" stroke-linejoin="round"><ellipse cx="25.7" cy="19.6" rx="1.9" ry="3.3"/><path d="M25.7,23 C26,27 27.5,31 30.5,33.2 C32.5,34.5 35,34.2 37.5,33.3"/><ellipse cx="37.6" cy="32.6" rx="3" ry="1.8"/><path d="M25.7,23 C25,28 21.5,35 16.5,39.5"/><ellipse cx="16.8" cy="40.3" rx="3.2" ry="1.9" transform="rotate(-35 16.8 40.3)"/><path d="M19,38.5 C22,35 28,33.5 35,32.6"/></g></svg></div></div><div class="t" style="left:2163.5px;top:1556.20px;font-size:28px;line-height:28px;color:#262626;font-weight:normal;letter-spacing:0.1px;">2003/05/08</div><div style="position:absolute;left:487px;top:1772px;width:2274px;height:2px;background:#f0f0f0"></div><div class="t" style="left:530px;width:40px;text-align:center;top:1692.20px;font-size:28px;line-height:28px;color:#262626">9</div><div class="t" style="left:646px;top:1692.20px;font-size:28px;line-height:28px;color:#1890ff;font-weight:normal;letter-spacing:-0.4px;">View</div><div style="position:absolute;left:723px;top:1695px;width:2px;height:25px;background:#f0f0f0"></div><div class="t" style="left:746px;top:1692.20px;font-size:28px;line-height:28px;color:#1890ff;font-weight:normal;letter-spacing:-0.4px;">Edit</div><div class="t" style="left:863.5px;top:1692.20px;font-size:28px;line-height:28px;color:#262626;font-weight:normal;letter-spacing:-0.55px;">Roderick Andrews</div><div class="tag" style="left:1157px;top:1684px;width:83px;color:#096dd9;background:#e6f7ff;border-color:#91d5ff">Male</div><div class="t" style="left:1350px;top:1692.20px;font-size:28px;line-height:28px;color:#262626;font-weight:normal;letter-spacing:-0.4px;">18865092743</div><div class="tag" style="left:1587px;top:1684px;width:177px;color:#7cb305;background:#fcffe6;border-color:#eaff8f">Lime member</div><div class="thumb" style="left:1881px;top:1670px"><div class="ti"><svg style="position:absolute;left:-4px;top:-4px;filter:blur(0.9px)" width="64" height="64" viewBox="-4 -4 64 64"><rect x="-4" y="-4" width="64" height="64" fill="#3b3b3c"/><ellipse cx="28" cy="36" rx="27" ry="12" fill="#3f4438"/><circle cx="18" cy="20" r="7" fill="#b84432"/><circle cx="36" cy="20" r="7" fill="#e09848"/><circle cx="16" cy="30" r="7" fill="#e8a04c"/><circle cx="30" cy="32" r="8" fill="#e08a3c"/><circle cx="48" cy="26" r="6" fill="#e09840"/><path d="M22,24 L26,20 L28,26 Z" fill="#a03a2a"/></svg></div></div><div class="thumb" style="left:1951px;top:1670px"><div class="ti"><svg style="position:absolute;left:-4px;top:-4px;filter:blur(0.9px)" width="64" height="64" viewBox="-4 -4 64 64"><rect x="-4" y="-4" width="64" height="64" fill="#e0a848"/><path d="M-4,-4 H60 V34 C50,30 44,14 40,10 C34,18 24,22 -4,18 Z" fill="#a8b8bf"/><path d="M30,24 C38,14 42,8 42,8 C46,18 50,30 60,36 V44 H30 Z" fill="#eac462"/><ellipse cx="10" cy="32" rx="9" ry="8" fill="#b8442e"/><ellipse cx="26" cy="34" rx="7" ry="7" fill="#c87a50"/><path d="M-4,42 H60 V60 H-4 Z" fill="#8c6a4c"/><path d="M10,40 H50 V44 H10 Z" fill="#5a4430"/></svg></div></div><div class="thumb" style="left:2021px;top:1670px"><div class="ti"><svg style="position:absolute;left:-4px;top:-4px;filter:blur(0.9px)" width="64" height="64" viewBox="-4 -4 64 64"><rect x="-4" y="-4" width="64" height="64" fill="#6e8a40"/><path d="M-4,22 C6,26 10,34 12,44 C8,50 0,52 -4,50 Z" fill="#98b458"/><path d="M16,6 C24,4 30,8 30,16 C34,20 36,26 34,34 C32,42 26,48 22,48 C18,40 16,30 14,22 Z" fill="#d4e486"/><path d="M36,8 C42,8 44,16 42,22 C38,20 36,14 36,8 Z" fill="#c4d874"/><path d="M30,52 C38,44 50,38 60,40 V60 H28 Z" fill="#dce890"/><path d="M-4,48 C6,46 14,52 18,60 H-4 Z" fill="#cad66e"/></svg></div></div><div class="t" style="left:2163.5px;top:1692.20px;font-size:28px;line-height:28px;color:#262626;font-weight:normal;letter-spacing:0.1px;">2000/02/03</div>
</body></html>
